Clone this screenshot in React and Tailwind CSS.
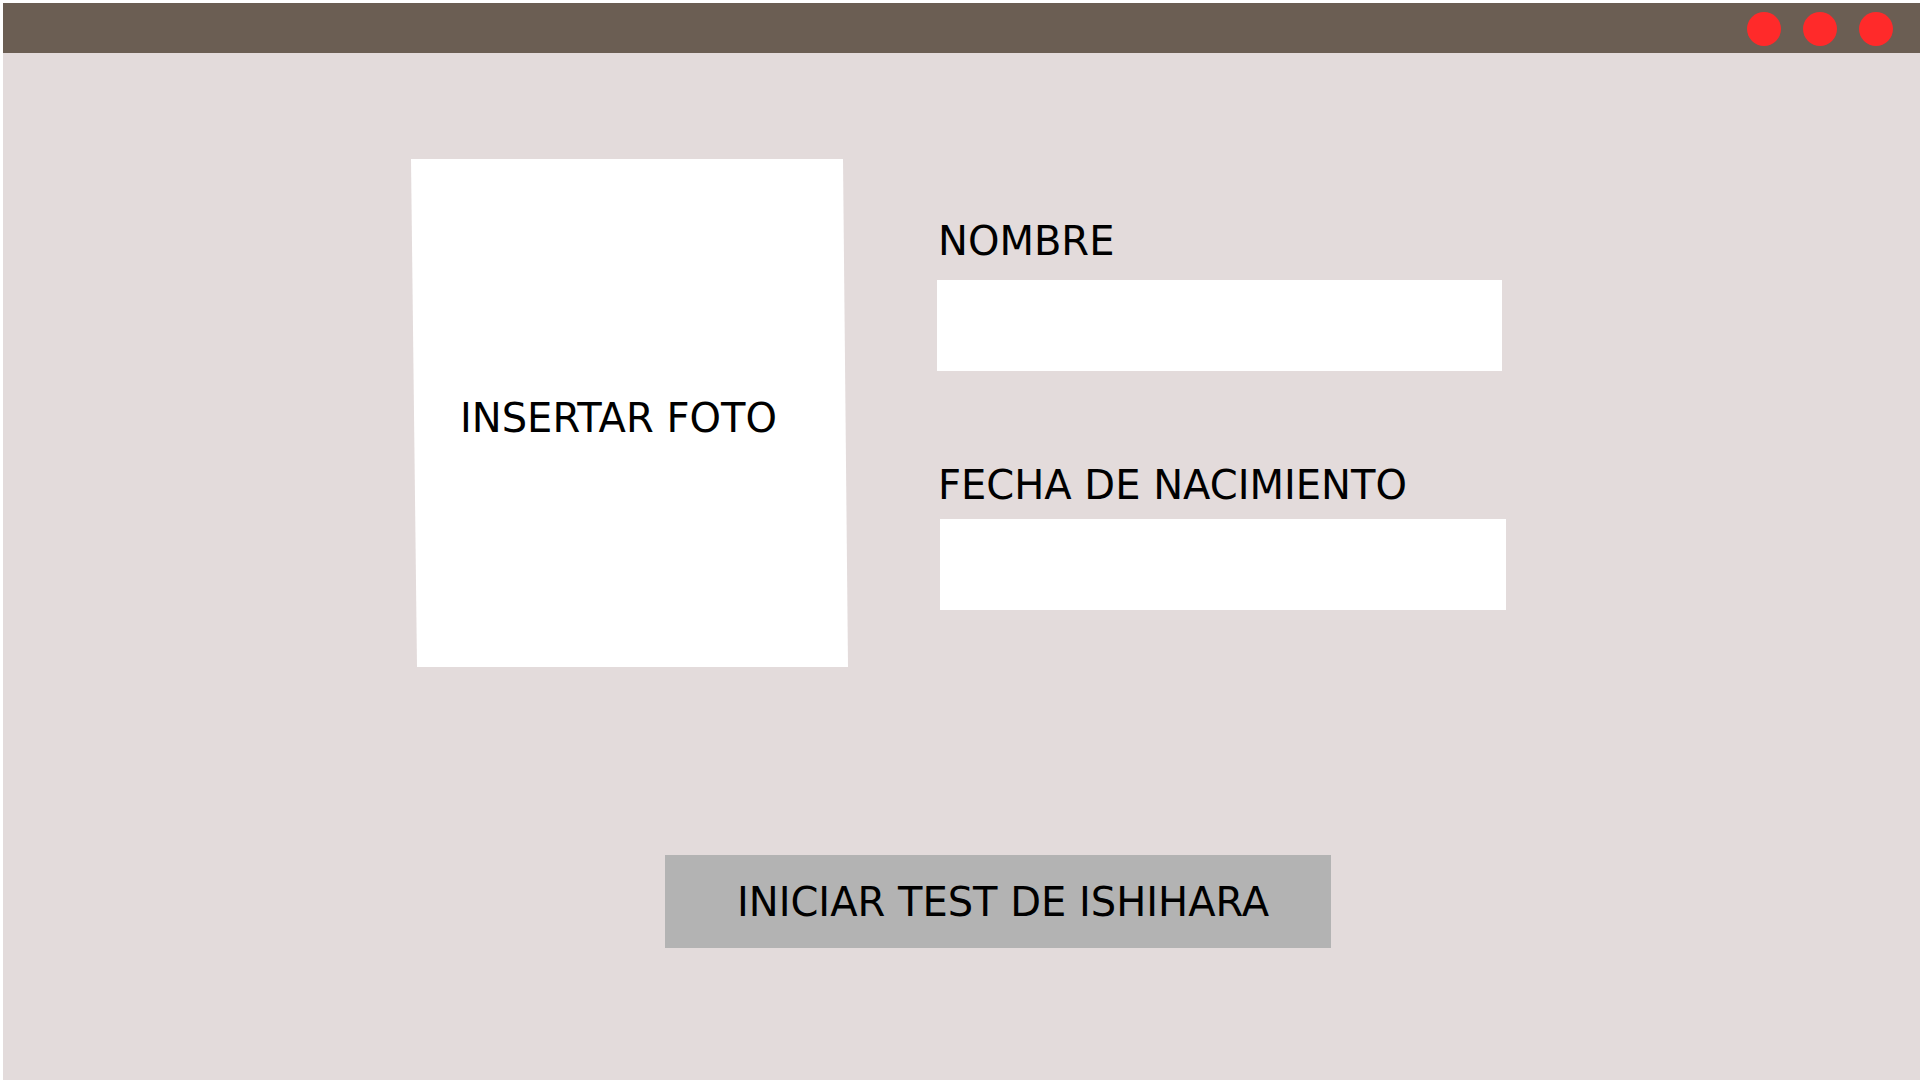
import React from "react";

const Dot = () => <div className="h-[34px] w-[34px] rounded-full bg-[#ff2a2a]" />;

const TopBar = () => (
  <div className="flex h-[50px] items-center justify-end gap-[22px] bg-[#6b5e53] pr-[27px] pt-[1px]">
    <Dot />
    <Dot />
    <Dot />
  </div>
);

// slightly slanted white card, like the mockup
const PhotoBox = () => (
  <div className="flex h-[508px] w-[437px] items-center bg-white pl-[49px] pt-[9px] [clip-path:polygon(0_0,432px_0,437px_100%,6px_100%)]">
    <span className="text-[40px] leading-none">INSERTAR FOTO</span>
  </div>
);

const Field = ({ label, className }) => (
  <div className={`flex flex-col ${className}`}>
    <label className="ml-[1px] text-[40px] leading-none">{label}</label>
  </div>
);

export default function App() {
  return (
    <div
      className="h-[1080px] w-[1920px] overflow-hidden border-l-[3px] border-t-[3px] border-white bg-[#e3dbdb] text-black"
      style={{ fontFamily: '"DejaVu Sans", "Liberation Sans", sans-serif' }}
    >
      <TopBar />
      <main className="flex flex-col pl-[408px]">
        <div className="mt-[106px] flex items-start">
          <PhotoBox />
          <div className="ml-[89px] mt-[62px] flex flex-col">
            <Field label="NOMBRE" />
            <div className="mt-[19px] h-[91px] w-[565px] bg-white" />
            <Field label="FECHA DE NACIMIENTO" className="mt-[94px]" />
            <div className="ml-[3px] mt-[14px] h-[91px] w-[566px] bg-white" />
          </div>
        </div>
        <button className="ml-[254px] mt-[188px] flex h-[93px] w-[666px] items-center justify-center bg-[#b3b3b3] pl-[10px] text-[40px] leading-none">
          INICIAR TEST DE ISHIHARA
        </button>
      </main>
    </div>
  );
}
